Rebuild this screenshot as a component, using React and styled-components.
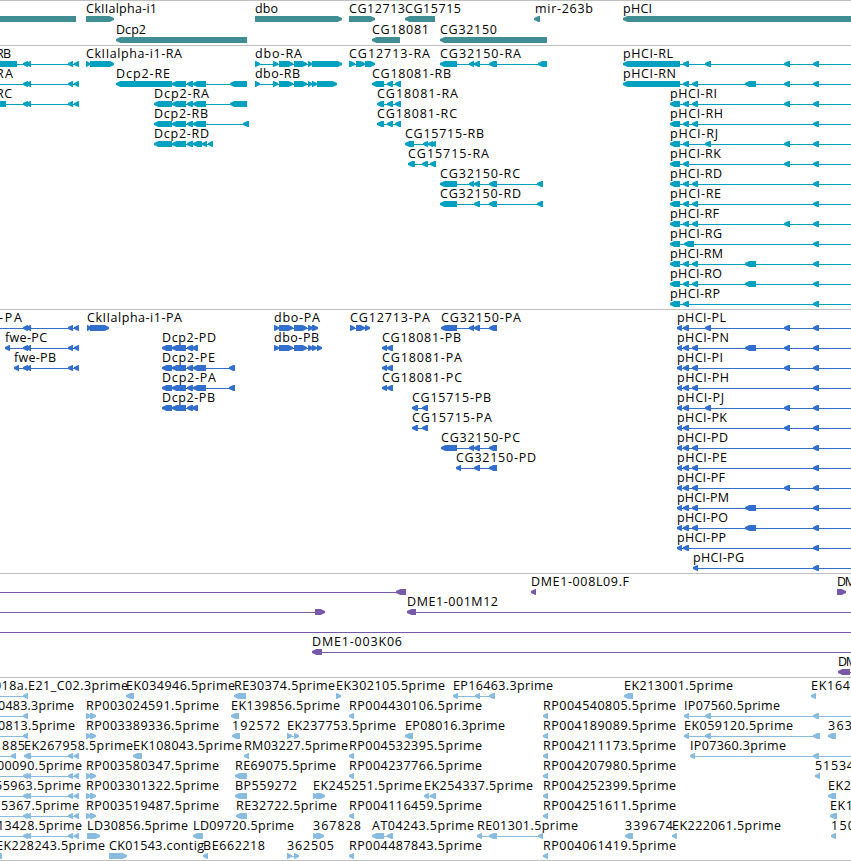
import React from "react";
import styled, { createGlobalStyle } from "styled-components";

const VIEW_WIDTH = 851;
const HEAD = 5;
const OFF = 870;

// fwd / rev build one feature: label, label start, label end, exon blocks
const rev = (label, x, end, ...blocks) => ({ label, x, end, blocks, dir: -1 });
const fwd = (label, x, end, ...blocks) => ({ label, x, end, blocks, dir: 1 });

// exons shared by several isoforms
const fweTail = [[23, 28], [26, 31], [68, 73], [74, 79]];
const dcpMid = [[172, 186], [187, 193], [193, 206]];
const A = [683, 689];
const B = [692, 698];
const C = [705, 711];
const D = [745, 756];
const E = [784, 790];
const F = [813, 819];
const END = [OFF, OFF + 10];

const phciR = (name, end, ...exons) =>
  rev(`pHCI-${name}`, 670, end, [670, 680], ...exons, F, END);
const phciP = (name, end, ...exons) =>
  rev(`pHCI-${name}`, 677, end, [677, 682], ...exons, F, END);
const rp3 = (id) => fwd(`RP00${id}.5prime`, 86, 219, [86, 91], [90, 96]);
const rp4 = (id) => rev(`RP00${id}.5prime`, 349, 482, [349, 354]);
const rp5 = (id) => rev(`RP00${id}.5prime`, 543, 676, [543, 548]);

const tracks = [
  {
    name: "genes",
    color: "#408e94",
    rowHeight: 21,
    rows: [
      [
        rev("", 0, 0, [-20, 76]),
        fwd("CkIIalpha-i1", 86, 157, [86, 114]),
        fwd("dbo", 255, 278, [255, 342]),
        fwd("CG12713", 349, 405, [349, 375]),
        rev("CG15715", 405, 461, [405, 435]),
        rev("mir-263b", 535, 593, [534, 540]),
        rev("pHCI", 623, 652, [623, OFF]),
      ],
      [
        rev("Dcp2", 116, 146, [116, 247]),
        rev("CG18081", 372, 429, [372, 400]),
        rev("CG32150", 440, 497, [440, 547]),
      ],
    ],
    gap: 2,
  },
  {
    name: "transcripts",
    color: "#00a0c0",
    rowHeight: 20,
    rows: [
      [
        rev("RB", -4, 11, [-20, 17], ...fweTail),
        fwd("CkIIalpha-i1-RA", 86, 182, [86, 90], [90, 114]),
        fwd("dbo-RA", 255, 302, [255, 260], [273, 278], [279, 293], [294, 307], [308, 312], [312, 342]),
        fwd("CG12713-RA", 349, 430, [349, 355], [356, 365], [365, 375]),
        rev("CG32150-RA", 440, 521, [440, 457], [469, 474], [474, 480], [489, 497], [538, 547]),
        rev("pHCI-RL", 623, 673, [623, 680], A, C, E, F, END),
      ],
      [
        rev("RA", -4, 13, [-20, -14], ...fweTail),
        rev("Dcp2-RE", 116, 170, [116, 172], ...dcpMid, [230, 247]),
        fwd("dbo-RB", 255, 300, [255, 260], [273, 278], [279, 293], [294, 307], [308, 312], [312, 317], [317, 337]),
        rev("CG18081-RB", 372, 451, [372, 384], [387, 393], [395, 401]),
        rev("pHCI-RN", 623, 676, [623, 680], A, B, D, E, F, END),
      ],
      [
        rev("RC", -4, 12, [-20, 6], ...fweTail),
        rev("Dcp2-RA", 154, 209, [154, 172], ...dcpMid, [230, 247]),
        rev("CG18081-RA", 377, 458, [377, 384], [387, 393], [395, 401]),
        phciR("RI", 717, A, B, E),
      ],
      [
        rev("Dcp2-RB", 154, 208, [154, 172], ...dcpMid, [243, 249]),
        rev("CG18081-RC", 377, 457, [377, 384], [387, 393], [395, 401]),
        phciR("RH", 723, A, B),
      ],
      [
        rev("Dcp2-RD", 154, 209, [154, 172], [172, 186], [187, 193], [193, 202], [202, 207], [208, 213]),
        rev("CG15715-RB", 405, 484, [405, 414], [423, 428], [428, 433], [431, 436]),
        phciR("RJ", 718, A, C, E),
      ],
      [
        rev("CG15715-RA", 408, 489, [408, 415], [422, 428], [430, 436]),
        phciR("RK", 721, A, E),
      ],
      [
        rev("CG32150-RC", 440, 520, [440, 457], [469, 474], [474, 480], [489, 497], [537, 543]),
        phciR("RD", 722, A, B),
      ],
      [
        rev("CG32150-RD", 440, 521, [440, 457], [474, 480], [489, 497], [537, 543]),
        phciR("RE", 721, A, B),
      ],
      [phciR("RF", 719, A, B, E)],
      [phciR("RG", 722, [684, 694])],
      [phciR("RM", 723, A, B, D)],
      [phciR("RO", 722, A, B, D)],
      [phciR("RP", 720, A)],
    ],
    gap: 3,
  },
  {
    name: "proteins",
    color: "#326ecc",
    rowHeight: 20,
    rows: [
      [
        rev("-PA", -1, 22, [-20, -14], ...fweTail),
        fwd("CkIIalpha-i1-PA", 87, 182, [87, 91], [90, 109]),
        fwd("dbo-PA", 274, 320, [274, 279], [279, 293], [294, 307], [308, 313], [312, 318]),
        fwd("CG12713-PA", 350, 430, [350, 355], [356, 365], [365, 370]),
        rev("CG32150-PA", 441, 521, [441, 457], [469, 474], [474, 480], [489, 497]),
        phciP("PL", 726, A, C, E),
      ],
      [
        rev("fwe-PC", 5, 47, [5, 10], ...fweTail),
        rev("Dcp2-PD", 162, 216, [162, 172], [172, 186], [187, 193], [192, 198]),
        fwd("dbo-PB", 274, 319, [274, 279], [279, 293], [294, 307], [308, 313], [312, 317], [317, 322]),
        rev("CG18081-PB", 382, 461, [382, 387], [387, 393]),
        phciP("PN", 729, A, B, D, E),
      ],
      [
        rev("fwe-PB", 14, 56, [14, 19], ...fweTail),
        rev("Dcp2-PE", 162, 215, [162, 172], ...dcpMid, [229, 235]),
        rev("CG18081-PA", 382, 462, [382, 387], [387, 393]),
        phciP("PI", 723, A, B, E),
      ],
      [
        rev("Dcp2-PA", 162, 216, [162, 172], ...dcpMid, [229, 235]),
        rev("CG18081-PC", 382, 462, [382, 387], [387, 393]),
        phciP("PH", 729, A, B),
      ],
      [
        rev("Dcp2-PB", 162, 215, [162, 172], [172, 186], [187, 193], [192, 198]),
        rev("CG15715-PB", 412, 491, [412, 418], [422, 428]),
        phciP("PJ", 724, A, C, E),
      ],
      [
        rev("CG15715-PA", 412, 492, [412, 418], [422, 428]),
        phciP("PK", 727, A, E),
      ],
      [
        rev("CG32150-PC", 441, 520, [441, 457], [469, 474], [474, 480], [489, 497]),
        phciP("PD", 728, A, B),
      ],
      [
        rev("CG32150-PD", 456, 536, [456, 461], [474, 480], [489, 497]),
        phciP("PE", 727, A, B),
      ],
      [phciP("PF", 725, A, B, E)],
      [phciP("PM", 729, A, B, D)],
      [phciP("PO", 728, A, B, D)],
      [phciP("PP", 726, A)],
      [rev("pHCI-PG", 693, 744, [693, 698], F, END)],
    ],
    gap: 3,
  },
  {
    name: "clones",
    color: "#7759a8",
    rowHeight: 20,
    rows: [
      [
        rev("", 0, 0, [-20, -14], [396, 406]),
        rev("DME1-008L09.F", 531, 629, [531, 536]),
        fwd("DM", 837, 856, [837, 846]),
      ],
      [
        fwd("", 0, 0, [-20, -14], [315, 325]),
        rev("DME1-001M12", 407, 498, [407, 416], END),
      ],
      [rev("", 0, 0, [-20, -14], END)],
      [rev("DME1-003K06", 312, 402, [312, 322], END)],
      [rev("DM", 838, 857, [838, 850], END)],
    ],
    gap: 3,
  },
  {
    name: "ests",
    color: "#88bbdd",
    rowHeight: 20,
    rows: [
      [
        rev("018a.E21_C02.3prime", -6, 128, [-20, -14], [23, 28]),
        rev("EK034946.5prime", 126, 235, [126, 134]),
        rev("RE30374.5prime", 234, 335, [234, 246]),
        fwd("EK302105.5prime", 336, 445, [336, 341]),
        rev("EP16463.3prime", 453, 553, [453, 458], [475, 480], [489, 495]),
        rev("EK213001.5prime", 624, 733, [624, 633]),
        rev("EK164", 811, 850, [811, 816]),
      ],
      [
        rev("0483.3prime", -2, 74, [-20, -14], [23, 28]),
        rp3("3024591"),
        rev("EK139856.5prime", 231, 340, [231, 239]),
        rp4("4430106"),
        rp5("4540805"),
        rev("IP07560.5prime", 684, 780, [684, 689], [705, 711], F, END),
      ],
      [
        rev("0813.5prime", -2, 75, [-20, -14], [23, 28]),
        rp3("3389336"),
        rev("192572", 232, 280, [232, 240]),
        fwd("EK237753.5prime", 287, 396, [287, 292], [294, 299]),
        rev("EP08016.3prime", 405, 505, [405, 413]),
        rp5("4189089"),
        rev("EK059120.5prime", 684, 793, [684, 689], [705, 711], [813, 820]),
        rev("363", 828, 852, [828, 836]),
      ],
      [
        rev("885", 2, 25, [-20, -14], [11, 16]),
        rev("EK267958.5prime", 24, 133, [24, 31], [68, 73], [74, 79]),
        rev("EK108043.5prime", 133, 242, [133, 142]),
        rev("RM03227.5prime", 244, 348, [244, 249]),
        rp4("4532395"),
        rp5("4211173"),
        rev("IP07360.3prime", 690, 786, [690, 695], F, END),
      ],
      [
        rev("00090.5prime", -3, 82, [-20, -14], ...fweTail),
        rp3("3580347"),
        rev("RE69075.5prime", 235, 336, [235, 247]),
        rp4("4237766"),
        rp5("4207980"),
        rev("51534", 815, 854, [815, 820]),
      ],
      [
        rev("55963.5prime", -5, 81, [-20, -14], ...fweTail),
        rp3("3301322"),
        rev("BP559272", 235, 297, [235, 247]),
        fwd("EK245251.5prime", 313, 422, [313, 318], [316, 325]),
        rev("EK254337.5prime", 424, 533, [424, 429], [430, 436]),
        rp5("4252399"),
        rev("EK2", 828, 851, [828, 836]),
      ],
      [
        rev("5367.5prime", 1, 79, [-20, -14], ...fweTail),
        rp3("3519487"),
        rev("RE32722.5prime", 236, 337, [236, 247]),
        rp4("4116459"),
        rp5("4251611"),
        rev("EK1", 830, 853, [830, 837]),
      ],
      [
        rev("13428.5prime", -3, 82, [-20, -14], ...fweTail),
        fwd("LD30856.5prime", 87, 188, [87, 100]),
        rev("LD09720.5prime", 193, 294, [193, 203]),
        fwd("367828", 313, 361, [313, 318], [316, 324]),
        rev("AT04243.5prime", 372, 474, [372, 384], [387, 393]),
        rev("RE01301.5prime", 477, 578, [477, 482], [489, 497], [538, 543]),
        rev("339674", 625, 673, [625, 633]),
        rev("EK222061.5prime", 672, 781, [672, 677]),
        rev("150", 831, 855, [831, 836]),
      ],
      [
        rev("EK228243.5prime", -4, 105, [-4, 2]),
        fwd("CK01543.contig", 109, 204, [109, 127]),
        rev("BE662218", 203, 265, [203, 208]),
        fwd("362505", 287, 334, [287, 292], [294, 299]),
        rp4("4487843"),
        rp5("4061419"),
      ],
    ],
    gap: 2,
  },
];

const blockPoints = ([x1, x2], dir) => {
  const head = Math.min(HEAD, x2 - x1) - 0.6;
  if (dir < 0) {
    return `${x1},17 ${x1 + head},15 ${x2},15 ${x2},21 ${x1 + head},21 ${x1},19`;
  }
  return `${x1},15 ${x2 - head},15 ${x2},17 ${x2},19 ${x2 - head},21 ${x1},21`;
};

const Feature = ({ label, x, end, blocks, dir }) => {
  const start = blocks[0][0];
  const stop = blocks[blocks.length - 1][1];

  return (
    <g>
      {blocks.length > 1 && (
        <rect x={start + 2} y="18" width={stop - start - 4} height="1" />
      )}
      {blocks.map((block, index) => (
        <polygon key={index} points={blockPoints(block, dir)} />
      ))}
      {label && (
        <Label x={x} y="12" textLength={end - x}>
          {label}
        </Label>
      )}
    </g>
  );
};

const App = () => {
  return (
    <Browser>
      <GlobalStyle />
      {tracks.map((track) => (
        <Track key={track.name} $color={track.color} $gap={track.gap}>
          {track.rows.map((row, index) => (
            <Row key={index} $height={track.rowHeight}>
              <Lane width={VIEW_WIDTH} height="22">
                {row.map((feature, i) => (
                  <Feature key={i} {...feature} />
                ))}
              </Lane>
            </Row>
          ))}
        </Track>
      ))}
    </Browser>
  );
};

export default App;

// Styled components
const GlobalStyle = createGlobalStyle`
  body {
    margin: 0;
    background: #fff;
    overflow: hidden;
  }
`;

const Browser = styled.main`
  display: flex;
  flex-direction: column;
  width: ${VIEW_WIDTH}px;
  overflow: hidden;
  border-bottom: 1px solid #c0c0c0;
`;

const Track = styled.section`
  display: flex;
  flex-direction: column;
  border-top: 1px solid #c0c0c0;
  padding-bottom: ${(props) => props.$gap}px;
  color: ${(props) => props.$color};
`;

const Row = styled.div`
  height: ${(props) => props.$height}px;
`;

const Lane = styled.svg`
  display: block;
  fill: currentColor;
`;

const Label = styled.text`
  font-family: "Open Sans", "DejaVu Sans", sans-serif;
  font-size: 12.5px;
  fill: #000;
`;
